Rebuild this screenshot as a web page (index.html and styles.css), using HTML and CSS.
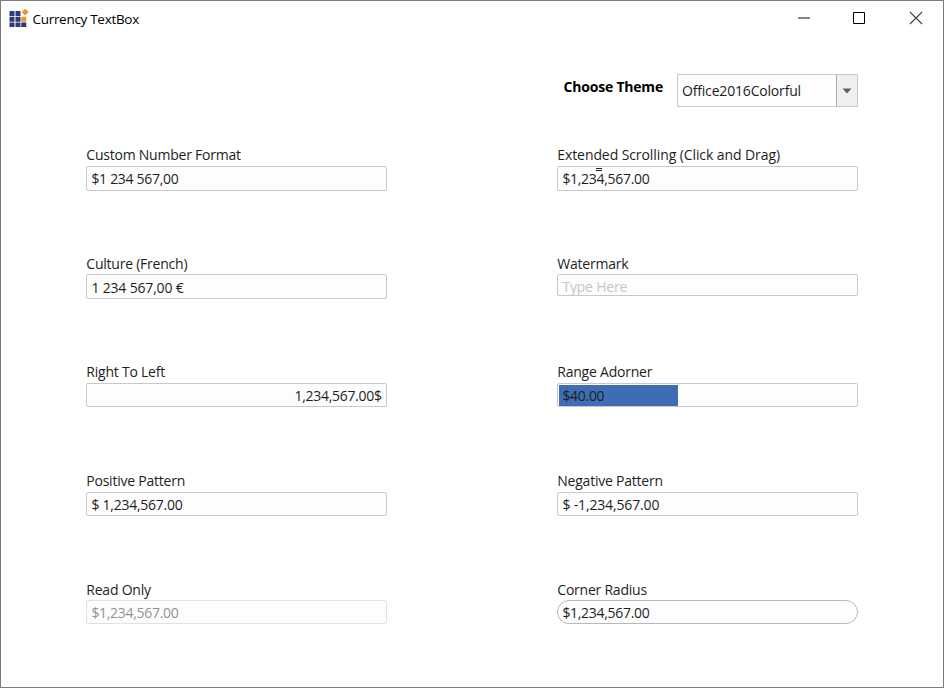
FILE: index.html
```html
<!DOCTYPE html>
<html lang="en">
<head>
<meta charset="utf-8">
<title>Currency TextBox</title>
<link rel="stylesheet" href="styles.css">
</head>
<body>
<div class="window">
  <header class="titlebar">
    <svg class="logo" width="20" height="20" viewBox="0 0 20 20">
      <g fill="#2b3a78"><path d="M.5 2H5.500v5H.5zM6.500 2h5v5h-5zM.5 7.800h5v5h-5zM6.500 7.800h5v5h-5zM.5 13.500h5v4.500h-5zM6.500 13.500h5v4.500h-5zM12.300 13.500h5v4.500h-5z"/></g>
      <path fill="#f0922d" d="M12.300 7.800h5v5h-5zM16.200-.3l3.500 3.400-3.500 3.400-3.500-3.400z"/>
    </svg>
    <span class="title">Currency TextBox</span>
    <svg class="controls" width="130" height="20" viewBox="0 0 130 20" fill="none">
      <path d="M1 9h12" stroke="#868686" stroke-width="2"/>
      <path d="M56.500 3.500h11v11h-11z" stroke="#000"/>
      <path d="M113 3l12 12M125 3l-12 12" stroke="#444" stroke-width="1.100"/>
    </svg>
  </header>
  <div class="theme">
    <span class="theme-label">Choose Theme</span>
    <div class="select"><span class="value">Office2016Colorful</span><span class="arrow"><svg width="10" height="6" viewBox="0 0 10 6"><path d="M.5.500h9L5 5.500z" fill="#606060"/></svg></span></div>
  </div>
  <main class="fields">
    <div class="field"><label>Custom Number Format</label><div class="box tall">$1 234 567,00</div></div>
    <div class="field"><label class="long">Extended Scrolling (Click and Drag)</label><div class="box tall scroll">$1,234,567.00<i class="cursor"></i></div></div>
    <div class="field"><label class="low">Culture (French)</label><div class="box tall euro">1 234 567,00 €</div></div>
    <div class="field"><label class="low">Watermark</label><div class="box watermark">Type Here</div></div>
    <div class="field"><label>Right To Left</label><div class="box rtl">1,234,567.00$</div></div>
    <div class="field"><label>Range Adorner</label><div class="box range"><span class="fill">$40.00</span></div></div>
    <div class="field"><label>Positive Pattern</label><div class="box pattern">$ 1,234,567.00</div></div>
    <div class="field"><label>Negative Pattern</label><div class="box pattern negative">$ -1,234,567.00</div></div>
    <div class="field"><label class="low">Read Only</label><div class="box readonly">$1,234,567.00</div></div>
    <div class="field"><label class="low">Corner Radius</label><div class="box round">$1,234,567.00</div></div>
  </main>
</div>
</body>
</html>
```
FILE: styles.css
```css
* { box-sizing: border-box; }
body { margin: 0; background: #fff; color: #1e1e1e; font: 14px/20px "Open Sans", "Noto Sans", sans-serif; }
.window { width: 944px; height: 688px; border: 1px solid #7b7b7b; overflow: hidden; }
.titlebar { display: flex; height: 36px; padding: 8px 16px 0 8px; }
.title { margin-left: 3.5px; color: #000; font-size: 13.5px; letter-spacing: -.3px; }
.controls { margin-left: auto; }
.theme { display: flex; height: 109px; padding: 37px 85px 0 0; justify-content: flex-end; }
.theme-label { margin: 3px 14px 0 0; color: #000; font-weight: 700; letter-spacing: -.2px; }
.select { display: flex; width: 181px; height: 33px; border: 1px solid #c8c8c8; background: #fdfdfd; }
.value { flex: 1; padding: 6px 4px; letter-spacing: -.18px; }
.arrow { display: flex; align-items: center; justify-content: center; width: 21px; border-left: 1px solid #ababab; background: #f0f0f0; }
.fields { display: grid; grid-template-columns: 301px 301px; grid-template-rows: 108px 109px 109px 108px 108px; column-gap: 170px; padding-left: 85px; }
label { display: block; height: 20px; padding-left: .3px; line-height: 18px; letter-spacing: -.23px; }
.long { letter-spacing: -.09px; }
.low { line-height: 20px; }
.box { height: 24px; padding: 0 4.400px; border: 1px solid #c8c8c8; border-radius: 2px; background: #fdfdfd; line-height: 24px; letter-spacing: -.3px; white-space: nowrap; }
.tall { height: 25px; }
.scroll { position: relative; }
.cursor { position: absolute; left: 38px; top: 1px; width: 6px; height: 3px; border: solid #222; border-width: 1px 0; }
.euro { line-height: 25px; letter-spacing: -.17px; }
.pattern { letter-spacing: -.25px; }
.negative { letter-spacing: -.15px; }
.watermark { height: 22px; line-height: 23px; color: #c6c6c6; letter-spacing: -.2px; }
.rtl { text-align: right; }
.range { padding: 1px 0 0 1px; }
.fill { display: block; width: 119px; height: 21px; padding-left: 3.400px; background: #3e6db5; line-height: 22px; }
.readonly { border-color: #e1e1e1; color: #929292; }
.round { border-color: #b8b8b8; border-radius: 12px; }
```
